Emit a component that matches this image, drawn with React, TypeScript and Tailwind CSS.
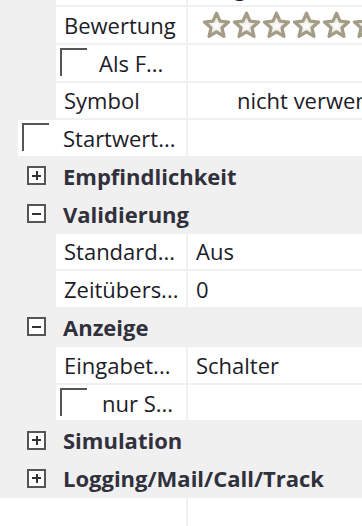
import React from "react";

const FONT = "font-['Open_Sans','Noto_Sans',sans-serif]";

function Star() {
  return (
    <svg width="29" height="28" viewBox="0 0 29 28" className="shrink-0">
      <defs>
        <radialGradient id="sf" cx="50%" cy="55%" r="60%">
          <stop offset="0%" stopColor="#ffffff" />
          <stop offset="100%" stopColor="#d6d0c2" />
        </radialGradient>
      </defs>
      <path
        d="M14.5 2.2 L18 10.2 L26.6 11 L20 16.8 L22 25.4 L14.5 20.9 L7 25.4 L9 16.8 L2.4 11 L11 10.2 Z"
        fill="url(#sf)"
        stroke="#a49c86"
        strokeWidth="3.2"
        strokeLinejoin="round"
      />
    </svg>
  );
}

function Checkbox() {
  return <div className="w-[27px] h-[28px] shrink-0 border-t-2 border-l-2 border-[#555555]" />;
}

function Toggle({ open }: { open: boolean }) {
  return (
    <div className="w-[19px] h-[19px] border-2 border-[#555555] bg-white relative shrink-0">
      <div className="absolute left-[3px] right-[3px] top-1/2 -translate-y-1/2 h-[2px] bg-[#333333]" />
      {!open && <div className="absolute top-[3px] bottom-[3px] left-1/2 -translate-x-1/2 w-[2px] bg-[#333333]" />}
    </div>
  );
}

const TXT = "text-[22px] text-[#1c1c28] leading-none";

function PropRow({
  indent,
  label,
  value,
  check,
  labelPad = 8,
  valuePad = 8,
  stars,
}: {
  indent: number;
  label?: string;
  value?: string;
  check?: boolean;
  labelPad?: number;
  valuePad?: number;
  stars?: boolean;
}) {
  return (
    <div className="flex h-[35.77px] shrink-0">
      <div style={{ width: indent }} className="shrink-0" />
      <div
        style={{ width: 186 - indent }}
        className="bg-white shrink-0 flex items-center overflow-hidden whitespace-nowrap"
      >
        {check && (
          <div className="ml-[4px] self-start mt-[3px]">
            <Checkbox />
          </div>
        )}
        <span style={{ marginLeft: labelPad }} className={TXT}>
          {label}
        </span>
      </div>
      <div className="bg-white ml-[2px] flex-1 flex items-center overflow-hidden whitespace-nowrap">
        {stars ? (
          <div className="flex gap-[1px] ml-[14px]">
            <Star />
            <Star />
            <Star />
            <Star />
            <Star />
            <Star />
          </div>
        ) : (
          <span style={{ marginLeft: valuePad }} className={TXT}>
            {value}
          </span>
        )}
      </div>
    </div>
  );
}

function GroupRow({ label, open }: { label: string; open: boolean }) {
  return (
    <div className="flex items-center h-[35.77px] shrink-0">
      <div className="ml-[27px]">
        <Toggle open={open} />
      </div>
      <span className="ml-[17px] text-[22px] font-bold text-[#30313c] leading-none whitespace-nowrap">{label}</span>
    </div>
  );
}

export default function App() {
  return (
    <div className={`w-[362px] h-[526px] overflow-hidden bg-white flex flex-col ${FONT}`}>
      <div className="bg-[#f0f0f0] flex flex-col gap-[2px] mt-[-30.8px] pb-[2px]">
        <PropRow indent={56} label="" value="Ausgabe" valuePad={8} />
        <PropRow indent={56} label="Bewertung" stars />
        <PropRow indent={56} label="Als F..." check labelPad={12} />
        <PropRow indent={56} label="Symbol" value="nicht verwendet" valuePad={49} />
        <div className="flex h-[35.77px] shrink-0">
          <div className="w-[18px] shrink-0" />
          <div className="w-[168px] bg-white shrink-0 flex items-center whitespace-nowrap overflow-hidden">
            <div className="ml-[4px] self-start mt-[3px]">
              <Checkbox />
            </div>
            <span className={`ml-[14px] ${TXT}`}>Startwert...</span>
          </div>
          <div className="bg-white ml-[2px] flex-1" />
        </div>
        <GroupRow label="Empfindlichkeit" open={false} />
        <GroupRow label="Validierung" open />
        <PropRow indent={56} label="Standard..." value="Aus" />
        <PropRow indent={56} label="Zeitübers..." value="0" />
        <GroupRow label="Anzeige" open />
        <PropRow indent={56} label="Eingabet..." value="Schalter" />
        <PropRow indent={56} label="nur S..." check labelPad={15} />
        <GroupRow label="Simulation" open={false} />
        <GroupRow label="Logging/Mail/Call/Track" open={false} />
      </div>
      <div className="flex-1 flex">
        <div className="w-[186px] bg-white" />
        <div className="w-[2px] bg-[#f0f0f0]" />
        <div className="flex-1 bg-white" />
      </div>
    </div>
  );
}
